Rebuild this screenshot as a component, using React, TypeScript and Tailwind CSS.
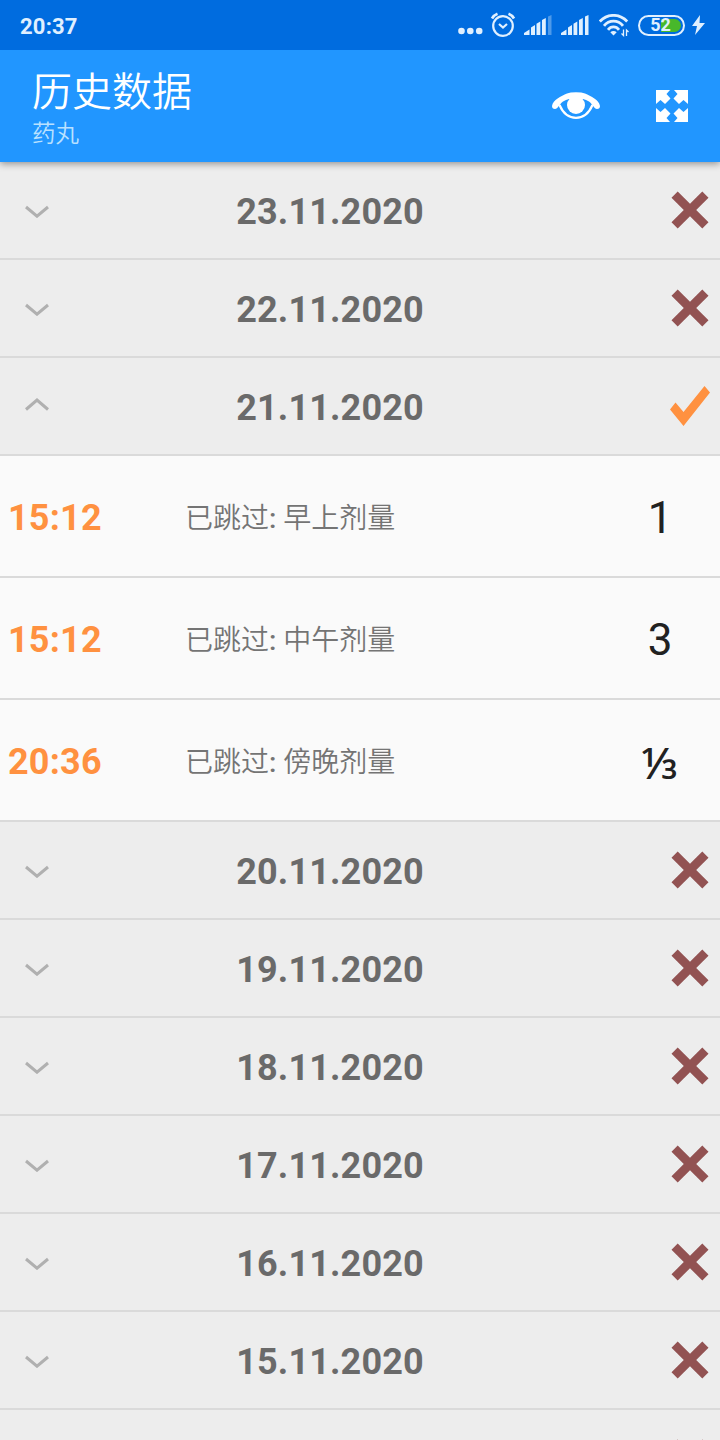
type Dose = { time: string; label: string; amount: string };
type Day = { date: string; taken?: boolean; doses?: Dose[] };

const days: Day[] = [
  { date: "23.11.2020" },
  { date: "22.11.2020" },
  {
    date: "21.11.2020",
    taken: true,
    doses: [
      { time: "15:12", label: "早上剂量", amount: "1" },
      { time: "15:12", label: "中午剂量", amount: "3" },
      { time: "20:36", label: "傍晚剂量", amount: "⅓" },
    ],
  },
  { date: "20.11.2020" },
  { date: "19.11.2020" },
  { date: "18.11.2020" },
  { date: "17.11.2020" },
  { date: "16.11.2020" },
  { date: "15.11.2020" },
];

function Signal({ weak = false }: { weak?: boolean }) {
  return (
    <svg width="28" height="20" viewBox="0 0 28 20" fill="#e0f0ff">
      <path d="M0 20v-2l5.5-3.5V20z" />
      <path d="M7 20v-7.5L11 10v10z" />
      <path d="M12.5 20V8.7L16.3 6.5V20z" />
      <path d="M18 20V5l3.8-2v17z" />
      <path d="M24 20V1.5L27.5 0v20z" opacity={weak ? 0.35 : 1} />
    </svg>
  );
}

function Cross() {
  return (
    <svg width="38" height="38" viewBox="-1 -1 38 38" fill="#925252" className="ml-[60px] shrink-0">
      <path d="M5.7-.5L18 11.8 30.3-.5 36.5 5.700 24.200 18 36.5 30.300 30.300 36.5 18 24.200 5.700 36.5-.5 30.300 11.800 18-.5 5.700z" />
    </svg>
  );
}

function StatusBar() {
  return (
    <div className="relative z-20 flex h-[50px] items-center justify-between bg-[#006cdf] pl-5 pr-[15px] text-[#e0f0ff]">
      <span className="pt-[3px] text-[22px] leading-none font-bold tracking-[0.2px]">20:37</span>
      <div className="flex items-center">
        <svg width="25" height="8" viewBox="0 0 25 8" fill="currentColor" className="mt-[11px] mr-[7px]">
          <circle cx="3.5" cy="4" r="3.3" />
          <circle cx="12.3" cy="4" r="3.3" />
          <circle cx="21.2" cy="4" r="3.3" />
        </svg>
        <svg width="26" height="26" viewBox="0 0 26 26" fill="none" stroke="currentColor" className="mr-2">
          <circle cx="13" cy="14" r="9.8" strokeWidth="2.2" />
          <path d="M2 6.5Q4 3 7.5 1.7M18.5 1.7Q22 3 24 6.5" strokeWidth="2.7" />
          <path d="M9 12l4 3.5 4-3.5" strokeWidth="2.2" />
        </svg>
        <span className="mr-[9px]">
          <Signal weak />
        </span>
        <span className="mr-[10px]">
          <Signal />
        </span>
        <svg width="30" height="23" viewBox="0 0 30 23" fill="none" stroke="currentColor" strokeWidth="2.8" className="mr-[9px]">
          <path d="M.8 7.5C8.5-.7 20.5-.7 28.2 7.5" />
          <path d="M5 11.8C10 5.500 19 5.500 24 11.800" />
          <path d="M9 15.8C12 12 17 12 20 15.800" />
          <path d="M14.5 21.6l-3.2-3.4q3.2-2.600 6.4 0z" fill="currentColor" stroke="none" />
          <path d="M24.5 15.5v6l-2-2M27.5 22v-6l2 2" strokeWidth="1.3" />
        </svg>
        <div className="relative mr-[7px] flex h-[21px] w-[47px] items-center justify-center overflow-hidden rounded-full border-2 border-current">
          <div className="absolute top-[2px] right-[2px] bottom-[2px] w-[20px] rounded-r-full bg-[#48b82b]" />
          <span className="relative right-px text-[18px] leading-none font-bold">52</span>
        </div>
        <svg width="13" height="20" viewBox="0 0 13 20" fill="currentColor">
          <path d="M8 0L0 11h5l-2 9 10-12H7.5z" />
        </svg>
      </div>
    </div>
  );
}

function Toolbar() {
  return (
    <header className="relative z-10 flex h-28 justify-between bg-[#2196ff] pr-8 pl-8 shadow-[0_2px_7px_rgba(0,0,0,0.38)]">
      <div className="flex flex-col">
        <h1 className="mt-5 text-[40px] leading-[46px] font-[350] text-white">历史数据</h1>
        <p className="mt-1 text-[23.5px] leading-7 font-[350] text-[#b9e1ff]">药丸</p>
      </div>
      <div className="flex items-start">
        <svg width="48" height="28" viewBox="0 0 48 28" className="mt-[42px] mr-14">
          <path d="M7.5 13Q13 25.800 24 25.800T40.5 13" fill="none" stroke="#fff" strokeWidth="2.2" />
          <path
            d="M0 14C1 8 9 4 15 1.5Q18 .2 24 .2T33 1.5C39 4 47 8 48 14Q48 17 45 17C42 17 41.5 13 37 9.5Q34 7.5 31 7L17 7Q14 7.5 11 9.5C6.5 13 6 17 3 17Q0 17 0 14z"
            fill="#fff"
          />
          <circle cx="24" cy="13" r="9" fill="#fff" />
        </svg>
        <svg width="32" height="32" viewBox="0 0 32 32" fill="#fff" className="mt-10">
          <path d="M0 0h14l-3.5 4 4 4.5L9 14l-4.5-4L0 14z" />
          <path d="M32 0H18l3.5 4-4 4.5L23 14l4.5-4 4.5 4z" />
          <path d="M0 32h14l-3.5-4 4-4.5L9 18l-4.5 4L0 18z" />
          <path d="M32 32H18l3.5-4-4-4.5L23 18l4.5 4 4.5-4z" />
        </svg>
      </div>
    </header>
  );
}

function DayRow({ date, taken, open }: { date: string; taken?: boolean; open: boolean }) {
  return (
    <div className="flex h-[98px] shrink-0 items-center border-b-2 border-[#dadada] bg-[#ededed] pl-[25px]">
      <svg width="24" height="16" viewBox="0 0 24 16" fill="none" stroke="#b0b0b0" strokeWidth="3">
        <path d={open ? "M1 11.5L12 2L23 11.5" : "M1 5L12 14.2L23 5"} />
      </svg>
      <span className="w-[562px] pt-1 text-center text-[36px] leading-none font-bold tracking-[0.15px] text-[#6a6a6a]">{date}</span>
      {taken ? (
        <svg width="40" height="40" viewBox="0 0 40 40" fill="#ff9140" className="ml-[59px] shrink-0">
          <path d="M0 23.5L5.500 16.500L13.500 26L34.500 0L40 6.500L13.500 40z" />
        </svg>
      ) : (
        <Cross />
      )}
    </div>
  );
}

function DoseRow({ time, label, amount }: Dose) {
  return (
    <div className="flex h-[122px] shrink-0 items-center border-b-2 border-[#dadada] bg-[#fafafa] pl-2">
      <span className="w-[177px] pt-1 text-[36px] leading-none font-bold tracking-[0.2px] text-[#ff9140]">{time}</span>
      <span className="flex-1 pt-1.5 text-[28px] leading-none font-[350] text-[#747474]">
        已跳过<span className="font-medium">: </span>
        {label}
      </span>
      {amount === "⅓" ? (
        <span className="w-[120px] pt-1 text-center font-['Noto_Sans'] text-[44px] leading-none font-medium text-[#212121]">{amount}</span>
      ) : (
        <span className="w-[120px] pt-1 text-center text-[44px] leading-none text-[#212121]">{amount}</span>
      )}
    </div>
  );
}

export default function App() {
  return (
    <div className="flex h-[1440px] w-[720px] flex-col overflow-hidden bg-[#ededed] font-[Roboto,'Noto_Sans_CJK_SC',sans-serif]">
      <StatusBar />
      <Toolbar />
      <main className="flex min-h-0 flex-1 flex-col overflow-hidden">
        {days.map((day) => (
          <div key={day.date} className="shrink-0">
            <DayRow date={day.date} taken={day.taken} open={!!day.doses} />
            {day.doses?.map((dose) => (
              <DoseRow key={dose.label} {...dose} />
            ))}
          </div>
        ))}
        {/* next row, only its top edge is in view */}
        <div className="flex h-[30px] items-start overflow-hidden pt-[29px] pl-[611px]">
          <Cross />
        </div>
      </main>
    </div>
  );
}
